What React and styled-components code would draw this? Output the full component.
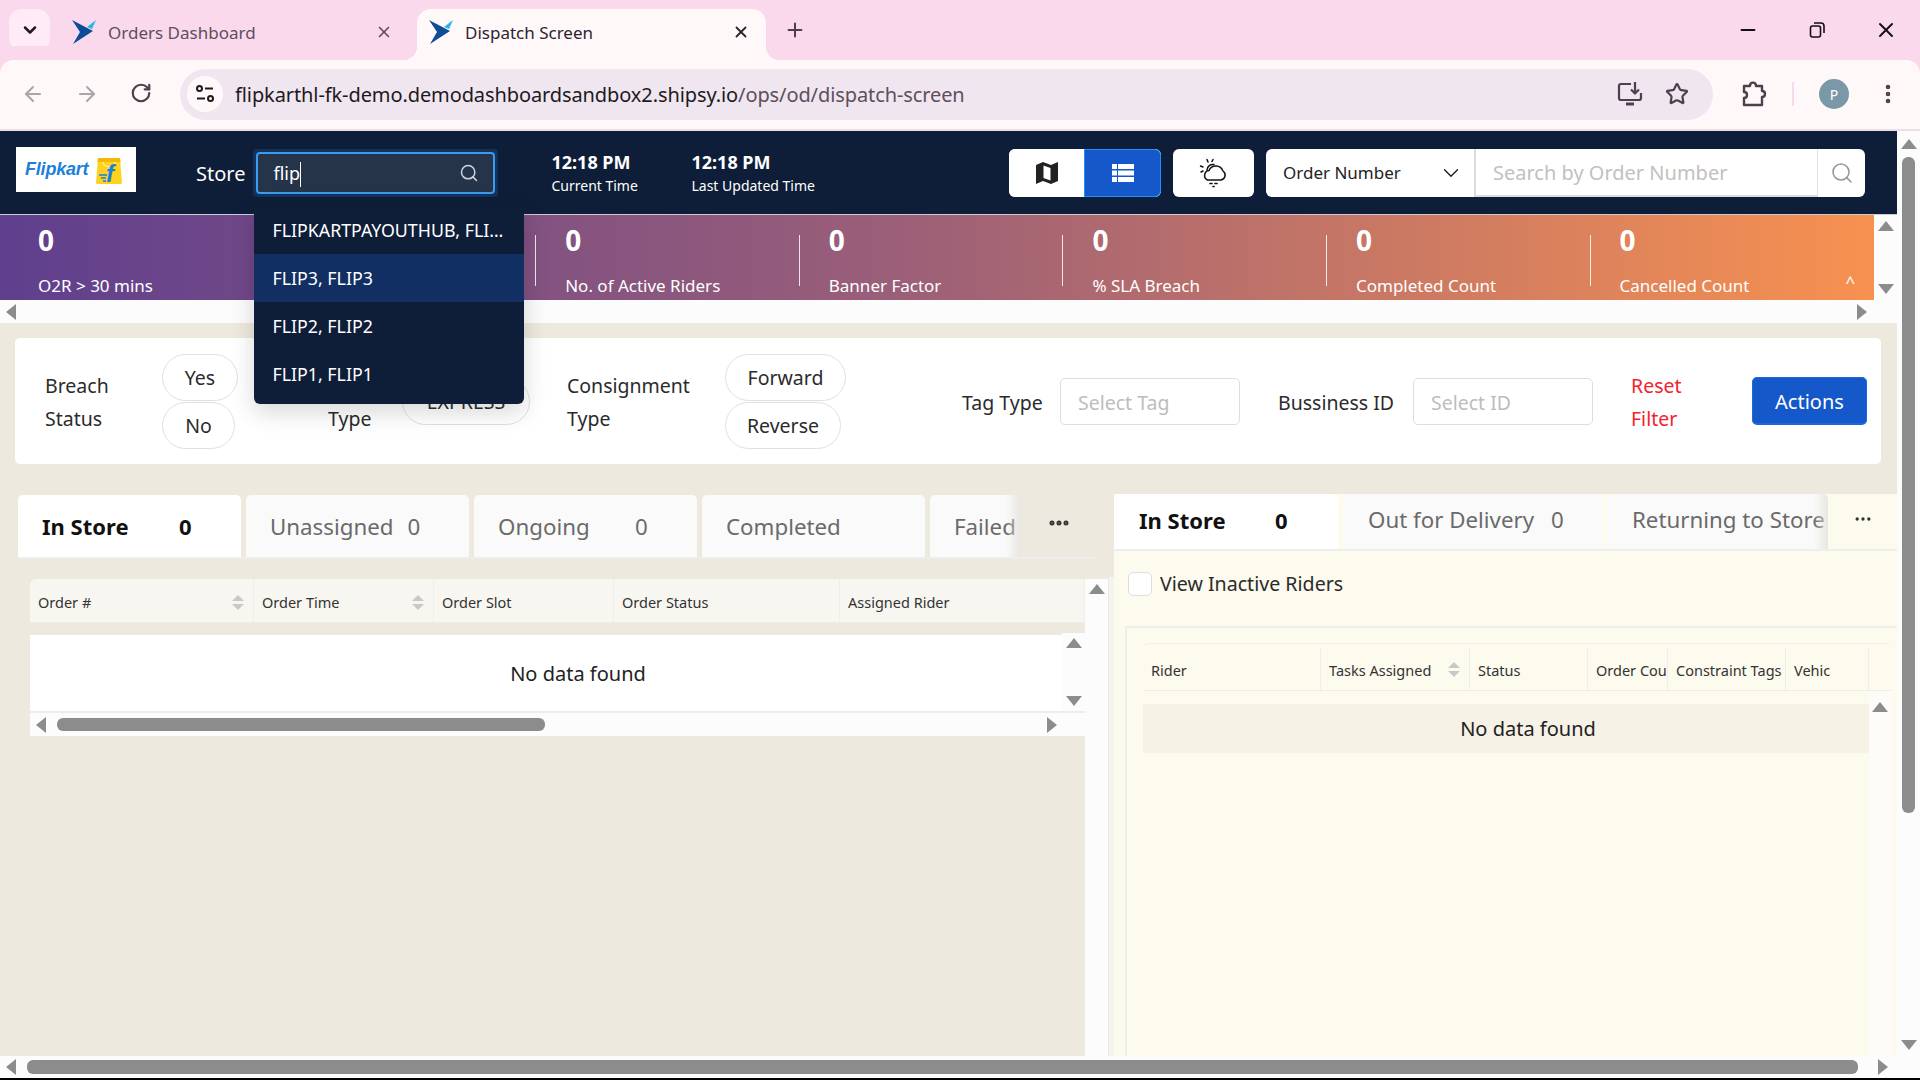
import React from 'react'
import styled, { createGlobalStyle } from 'styled-components'
import { ArrowLeft, ArrowRight, ChevronDown, Minus, MoreHorizontal, MoreVertical, Plus, RotateCw, Search, Star, X } from 'lucide-react'

const Global = createGlobalStyle`
	html, body { margin: 0; padding: 0; overflow: hidden; background: #fff; }
	* { box-sizing: border-box; }
	body { font-family: "Noto Sans", "Open Sans", sans-serif; color: #222; }
`

const Screen = styled.div`
	width: 1920px;
	height: 1080px;
	display: flex;
	flex-direction: column;
	overflow: hidden;
	background: #000;
`

/* browser chrome */
const TabStrip = styled.div`
	flex: 0 0 60px;
	display: flex;
	align-items: flex-end;
	padding-left: 9px;
	background: #fbd9ec;
`
const TabMenu = styled.div`
	width: 41px;
	height: 42px;
	margin-bottom: 9px;
	margin-right: 10px;
	display: flex;
	align-items: center;
	justify-content: center;
	border-radius: 13px;
	background: #ffebf5;
	color: #1f1a1f;
`
const BrowserTab = styled.div`
	position: relative;
	width: 349px;
	height: 51px;
	margin-right: 8px;
	padding: 0 16px 5px 12px;
	display: flex;
	align-items: center;
	font-size: 17px;
	border-radius: 14px 14px 0 0;
	color: ${p => (p.$active ? '#2c2530' : '#5d4f5c')};
	background: ${p => (p.$active ? '#fff8f9' : 'transparent')};
	${p => p.$active && `
		&::before, &::after {
			content: '';
			position: absolute;
			bottom: 0;
			width: 14px;
			height: 14px;
		}
		&::before { left: -14px; background: radial-gradient(circle at 0 0, transparent 14px, #fff8f9 14.5px); }
		&::after { right: -14px; background: radial-gradient(circle at 100% 0, transparent 14px, #fff8f9 14.5px); }
	`}
`
const TabTitle = styled.span`
	flex: 1;
	margin-left: 12px;
`
const TabPlus = styled.div`
	margin: 0 0 15px 10px;
	height: 30px;
	display: flex;
	align-items: center;
	color: #4d3f4b;
`
const WindowControls = styled.div`
	margin-left: auto;
	height: 60px;
	display: flex;
	align-items: center;
	color: #111;
`
const WindowButton = styled.div`
	width: 69px;
	display: flex;
	justify-content: center;
`
const Toolbar = styled.div`
	flex: 0 0 71px;
	display: flex;
	align-items: center;
	padding: 0 0 1px 0;
	background: #fff8f9;
	border-bottom: 2px solid #eadfe6;
	border-radius: 14px 14px 0 0;
	box-shadow: 0 -14px 0 #fbd9ec;
`
const NavButton = styled.div`
	width: 54px;
	display: flex;
	justify-content: center;
	color: ${p => (p.$off ? '#aaa5a8' : '#4d3f4b')};
`
const NavGroup = styled.div`
	display: flex;
	padding-left: 6px;
	margin-right: 12px;
`
const AddressBar = styled.div`
	width: 1533px;
	height: 51px;
	display: flex;
	align-items: center;
	padding: 0 24px 0 7px;
	border-radius: 26px;
	background: #f0e6ef;
`
const SiteIcon = styled.div`
	width: 36px;
	height: 36px;
	border-radius: 50%;
	background: #fff8f9;
	display: flex;
	align-items: center;
	justify-content: center;
`
const Url = styled.div`
	flex: 1;
	margin-left: 12px;
	font-size: 20px;
	letter-spacing: -0.1px;
	white-space: nowrap;
	color: #1d1a1e;
	span { color: #5d4f5c; }
`
const AddressIcon = styled.div`
	margin-left: 22px;
	display: flex;
	color: #4d3f4b;
`
const ToolbarIcons = styled.div`
	flex: 1;
	display: flex;
	align-items: center;
	color: #4d3f4b;
	padding-left: 28px;
`
const ToolbarSep = styled.div`
	width: 2px;
	height: 24px;
	margin: 0 25px;
	background: #fbd9ec;
`
const Avatar = styled.div`
	width: 30px;
	height: 30px;
	border-radius: 50%;
	background: #7b98a8;
	color: #fff;
	font-size: 14px;
	display: flex;
	align-items: center;
	justify-content: center;
	margin-right: 27px;
`

/* app shell */
const AppBody = styled.div`
	flex: 1;
	display: flex;
	min-height: 0;
	background: #fcfcfc;
`
const Page = styled.div`
	flex: 0 0 1897px;
	display: flex;
	flex-direction: column;
	min-height: 0;
`
const TopBar = styled.div`
	flex: 0 0 84px;
	display: flex;
	align-items: center;
	padding: 0 32px 0 16px;
	background: #0e1e38;
	border-bottom: 1px solid #c9ccd2;
	color: #fff;
`
const LogoBox = styled.div`
	width: 120px;
	height: 45px;
	margin-top: -6px;
	background: #fff;
	display: flex;
	align-items: center;
	padding-left: 9px;
	gap: 7px;
`
const LogoWord = styled.span`
	font: italic 700 18px "Liberation Sans", sans-serif;
	color: #1b7fdb;
	letter-spacing: -0.2px;
`
const StoreLabel = styled.span`
	margin: 2px 0 0 60px;
	font-size: 20px;
`
const StoreField = styled.div`
	position: relative;
	width: 245px;
	height: 48px;
	margin-left: 8px;
	padding: 3px;
	border-radius: 4px;
	background: #12315b;
`
const StoreInput = styled.div`
	width: 100%;
	height: 100%;
	display: flex;
	align-items: center;
	justify-content: space-between;
	padding: 0 14px 0 15px;
	border: 2px solid #3a9bf0;
	border-radius: 4px;
	background: #263449;
	font-size: 18px;
	color: #fff;
`
const StoreText = styled.span`
	padding-top: 3px;
`
const Caret = styled.i`
	display: inline-block;
	width: 1px;
	height: 25px;
	background: #fff;
	vertical-align: -7px;
`
const StoreMenu = styled.div`
	position: absolute;
	z-index: 20;
	top: 57px;
	left: 1px;
	width: 270px;
	padding-bottom: 6px;
	background: #0e1e38;
	border-radius: 0 0 6px 6px;
	box-shadow: 0 8px 24px rgba(0, 0, 0, 0.16);
`
const StoreOption = styled.div`
	height: 48px;
	line-height: 48px;
	padding: 0 18px;
	font-size: 17.8px;
	color: #fff;
	white-space: nowrap;
	overflow: hidden;
	text-overflow: ellipsis;
	background: ${p => (p.$selected ? '#122f63' : 'transparent')};
`
const TimeBlock = styled.div`
	width: 140px;
	margin-left: ${p => (p.$first ? '53px' : '0')};
`
const TimeValue = styled.div`
	font-size: 18px;
	font-weight: 700;
	line-height: 24px;
`
const TimeLabel = styled.div`
	margin-top: 2px;
	font-size: 14px;
	line-height: 20px;
`
const ViewToggle = styled.div`
	margin-left: auto;
	width: 152px;
	height: 48px;
	display: flex;
	border-radius: 6px;
	overflow: hidden;
	background: #fff;
`
const ViewButton = styled.div`
	flex: 0 0 ${p => p.$width}px;
	display: flex;
	align-items: center;
	justify-content: center;
	background: ${p => (p.$on ? '#1558c9' : '#fff')};
	${p => p.$on && 'border: 1px solid #1f8fff; border-radius: 0 6px 6px 0;'}
`
const WeatherButton = styled.div`
	width: 81px;
	height: 48px;
	margin: 0 12px;
	display: flex;
	align-items: center;
	justify-content: center;
	border-radius: 6px;
	background: #fff;
`
const SearchGroup = styled.div`
	display: flex;
	height: 48px;
	border-radius: 6px;
	overflow: hidden;
	background: #fff;
	color: #222;
`
const SearchType = styled.div`
	width: 210px;
	display: flex;
	align-items: center;
	justify-content: space-between;
	padding: 0 10px 0 17px;
	border-right: 2px solid #dcdcdc;
	font-size: 17px;
`
const SearchText = styled.div`
	width: 341px;
	padding: 2px 0 0 17px;
	display: flex;
	align-items: center;
	font-size: 20px;
	color: #c4c0bd;
	border-bottom: 2px solid #dcdcdc;
`
const SearchIcon = styled.div`
	width: 48px;
	display: flex;
	align-items: center;
	justify-content: center;
	border-left: 1px solid #e3e3e3;
	color: #999;
`

/* stats */
const StatsRow = styled.div`
	flex: 0 0 85px;
	display: flex;
`
const StatsBand = styled.div`
	flex: 0 0 1874px;
	display: grid;
	grid-template-columns: repeat(7, 263.6px);
	padding-left: 8px;
	background: linear-gradient(90deg, #5f3f8e 0%, #9b5f78 48%, #f89150 100%);
	color: #fff;
`
const Stat = styled.div`
	position: relative;
	padding-left: 30px;
	${p => p.$divider && `
		&::before {
			content: '';
			position: absolute;
			left: 0;
			top: 20px;
			height: 51px;
			width: 1px;
			background: rgba(255, 255, 255, 0.85);
		}
	`}
`
const StatValue = styled.div`
	margin-top: 6px;
	font-size: 28px;
	font-weight: 700;
	line-height: 38px;
`
const StatLabel = styled.div`
	margin-top: 15px;
	font-size: 17px;
	line-height: 24px;
	white-space: nowrap;
`
const Collapse = styled.span`
	position: absolute;
	right: -2px;
	bottom: 7px;
	font-size: 17px;
`
const VTrack = styled.div`
	flex: 0 0 ${p => p.$width || 23}px;
	display: flex;
	flex-direction: column;
	align-items: center;
	justify-content: ${p => (p.$top ? 'flex-start' : 'space-between')};
	padding: ${p => p.$pad || 7}px 0;
	background: ${p => p.$bg || '#fcfcfc'};
`
const HTrack = styled.div`
	flex: 0 0 ${p => p.$height || 23}px;
	display: flex;
	align-items: center;
	padding: 0 ${p => p.$right || 7}px 0 ${p => p.$pad || 7}px;
	background: #fcfcfc;
	justify-content: space-between;
`
const Arrow = styled.i`
	display: block;
	flex: none;
	width: 0;
	height: 0;
	border-style: solid;
	border-color: transparent;
	${p => p.$dir === 'up' && `border-width: 0 ${p.$size || 8}px ${p.$size || 10}px; border-bottom-color: ${p.$color || '#8c8c8c'};`}
	${p => p.$dir === 'down' && `border-width: ${p.$size || 10}px ${p.$size || 8}px 0; border-top-color: ${p.$color || '#8c8c8c'};`}
	${p => p.$dir === 'left' && 'border-width: 8px 10px 8px 0; border-right-color: #8c8c8c;'}
	${p => p.$dir === 'right' && 'border-width: 8px 0 8px 10px; border-left-color: #8c8c8c;'}
`
const Thumb = styled.div`
	height: 13px;
	border-radius: 6px;
	background: #8c8c8c;
	width: ${p => p.$width}px;
	margin-left: ${p => p.$left || 0}px;
	margin-right: auto;
`

/* filters */
const FilterCard = styled.div`
	flex: 0 0 126px;
	margin: 15px 16px 0 15px;
	display: flex;
	align-items: center;
	padding-left: 30px;
	border-radius: 5px;
	background: #fff;
`
const FilterGroup = styled.div`
	flex: 0 0 ${p => p.$width}px;
	display: flex;
	align-items: center;
`
const FilterLabel = styled.div`
	flex: 0 0 ${p => p.$width}px;
	font-size: 19.5px;
	line-height: 33px;
	color: #2b2b2b;
	padding-top: 2px;
`
const PillStack = styled.div`
	display: flex;
	flex-direction: column;
	gap: 1px;
	align-items: flex-start;
`
const Pill = styled.div`
	width: ${p => p.$width}px;
	height: 47px;
	display: flex;
	align-items: center;
	justify-content: center;
	border: 1px solid #e0e0e0;
	border-radius: 24px;
	font-size: 19.5px;
	color: #2b2b2b;
`
const SelectBox = styled.div`
	width: 180px;
	height: 47px;
	padding: 2px 0 0 17px;
	display: flex;
	align-items: center;
	border: 1px solid #dedede;
	border-radius: 5px;
	font-size: 19.5px;
	color: #bdbdbd;
`
const ResetLink = styled.div`
	flex: 0 0 121px;
	padding-top: 2px;
	color: #f5222d;
	font-size: 19.5px;
	line-height: 33px;
`
const ActionButton = styled.div`
	width: 115px;
	height: 48px;
	padding-top: 2px;
	display: flex;
	align-items: center;
	justify-content: center;
	border: 1px solid #1a68dc;
	border-bottom: 2px solid #1a68dc;
	border-radius: 5px;
	background: #1558c9;
	color: #fff;
	font-size: 20px;
`

/* panels */
const Panels = styled.div`
	flex: 1;
	min-height: 0;
	margin-top: 30px;
	display: flex;
`
const OuterBg = styled.div`
	flex: 1;
	min-height: 0;
	display: flex;
	flex-direction: column;
	background: #ede9de;
`
const LeftPanel = styled.div`
	flex: 0 0 1109px;
	display: flex;
	flex-direction: column;
	padding-top: 1px;
	min-height: 0;
	background: #ede9de;
`
const RightPanel = styled.div`
	flex: 1;
	display: flex;
	flex-direction: column;
	border-left: 5px solid;
	border-image: linear-gradient(#ede9de 84px, #f6f4ef 84px) 1;
	background: #fdfaee;
	min-height: 0;
`
const TabBar = styled.div`
	flex: none;
	display: flex;
	gap: 5px;
	margin-left: ${p => p.$left || 0}px;
	margin-right: ${p => p.$right || 0}px;
	height: ${p => p.$height}px;
	border-bottom: 2px solid #eeeeec;
	overflow: hidden;
`
const Tab = styled.div`
	position: relative;
	flex: 0 0 auto;
	width: ${p => p.$width || 223}px;
	height: 100%;
	padding: 0 0 ${p => p.$lift || 0}px ${p => p.$pad || 24}px;
	display: flex;
	align-items: center;
	border-radius: 5px 5px 0 0;
	background: ${p => (p.$active ? '#fff' : '#fafafa')};
	color: ${p => (p.$active ? '#111' : '#6a6a6a')};
	font-size: ${p => (p.$active ? 22 : 22.3)}px;
	font-weight: ${p => (p.$active ? 700 : 400)};
	white-space: nowrap;
	overflow: hidden;
	${p => p.$fade && `
		&::after {
			content: '';
			position: absolute;
			right: 0;
			top: 0;
			bottom: 0;
			width: 14px;
			background: linear-gradient(90deg, rgba(240, 240, 236, 0), rgba(228, 226, 220, 0.8));
		}
	`}
`
const TabLabel = styled.span`
	min-width: ${p => p.$width || 0}px;
	padding-right: 14px;
`
const TabMore = styled.div`
	flex: 1;
	display: flex;
	align-items: center;
	justify-content: center;
	color: #333;
	padding: 0 ${p => p.$nudge || 0}px 6px 0;
`
const TableArea = styled.div`
	flex: 1;
	min-height: 0;
	display: flex;
	margin-top: 20px;
	padding-left: 30px;
`
const TableMain = styled.div`
	flex: 0 0 1055px;
	display: flex;
	flex-direction: column;
`
const HeadRow = styled.div`
	flex: 0 0 ${p => p.$height || 44}px;
	display: flex;
	background: ${p => p.$bg || '#f8f6f1'};
	border-bottom: 1px solid #efede6;
	border-radius: ${p => (p.$round ? '6px 0 0 0' : '0')};
`
const HeadCell = styled.div`
	flex: 0 0 ${p => p.$width}px;
	display: flex;
	align-items: center;
	justify-content: space-between;
	padding: ${p => p.$top || 1}px ${p => p.$sortPad || 9}px 0 8px;
	font-size: 14.5px;
	color: #333;
	white-space: nowrap;
	overflow: hidden;
	border-right: 1px solid #f0eee8;
`
const ClipText = styled.span`
	display: block;
	width: ${p => p.$width}px;
	overflow: hidden;
`
const Sort = styled.span`
	display: flex;
	flex-direction: column;
	gap: 3px;
`
const BodyRow = styled.div`
	flex: 0 0 78px;
	margin-top: 10px;
	display: flex;
`
const EmptyCell = styled.div`
	flex: 1;
	margin-top: 2px;
	padding-left: 64px;
	display: flex;
	align-items: center;
	justify-content: center;
	background: #fff;
	font-size: 20px;
	color: #222;
`
const RowDivider = styled.div`
	flex: 0 0 2px;
	background: #efede6;
`
const CheckRow = styled.div`
	flex: none;
	display: flex;
	align-items: center;
	gap: 8px;
	margin-top: 19px;
	padding-left: 14px;
	font-size: 19.6px;
	color: #2b2b2b;
`
const CheckBox = styled.span`
	width: 24px;
	height: 24px;
	border: 1px solid #dedede;
	border-radius: 5px;
	background: #fff;
`
const RiderSection = styled.div`
	flex: 1;
	min-height: 0;
	margin: 29px 0 0 11px;
	padding: 15px 6px 0 16px;
	display: flex;
	flex-direction: column;
	border-top: 2px solid #eeeeea;
	border-left: 2px solid #eeeeea;
`
const RiderCard = styled.div`
	flex: 1;
	min-height: 0;
	display: flex;
	flex-direction: column;
	padding-top: 4px;
	border-top: 1px solid #f2efe4;
	border-radius: 6px 6px 0 0;
`
const RiderBody = styled.div`
	flex: 1;
	min-height: 0;
	display: flex;
`
const RiderMain = styled.div`
	flex: 0 0 726px;
	padding-top: 13px;
`
const EmptyBand = styled.div`
	height: 49px;
	padding-left: 44px;
	display: flex;
	align-items: center;
	justify-content: center;
	background: #f6f2e6;
	font-size: 20px;
	color: #222;
`
const PageScroll = styled(VTrack)`
	padding: 8px 0 6px;
`
const ScrollThumb = styled.div`
	width: 13px;
	height: 656px;
	margin-top: 8px;
	margin-bottom: auto;
	border-radius: 6px;
	background: #8c8c8c;
`
const BottomBar = styled.div`
	flex: 0 0 22px;
	display: flex;
	align-items: center;
	padding-left: 6px;
	background: #fcfcfc;
`
const BlackEdge = styled.div`
	flex: 0 0 2px;
	background: #000;
`
const BottomThumb = styled.div`
	width: 1831px;
	height: 14px;
	margin: 0 20px 0 11px;
	border-radius: 6px;
	background: #8c8c8c;
`

const Favicon = () => (
	<svg width="24" height="24" viewBox="0 0 24 24">
		<path d="M0 0 L21 11 L1 24 L8 12 Z" fill="#0d4c99" />
		<path d="M15 7 L24 0 L20 9 Z" fill="#29b4e8" />
	</svg>
)

const TuneIcon = () => (
	<svg width="20" height="20" viewBox="0 0 20 20" fill="none" stroke="#1f1a1f" strokeWidth="2">
		<circle cx="4.5" cy="4.5" r="2.5" />
		<path d="M10 4.5 H18 M2 14.5 H10" />
		<circle cx="15.5" cy="14.5" r="2.5" />
	</svg>
)

const RestoreIcon = () => (
	<svg width="18" height="18" viewBox="0 0 18 18" fill="none" stroke="#111" strokeWidth="1.6">
		<rect x="2.5" y="5" width="10" height="11" rx="2" />
		<path d="M6 2 H13 Q16 2 16 5 V12" />
	</svg>
)

const InstallIcon = () => (
	<svg width="26" height="26" viewBox="0 0 26 26" fill="none" stroke="#4d3f4b" strokeWidth="2.2">
		<path d="M14 3 H4 Q2 3 2 5 V17 Q2 19 4 19 H22 Q24 19 24 17 V12" />
		<path d="M9 23 H17" strokeWidth="3" />
		<path d="M18 1 V12 M14 8.5 L18 12.5 L22 8.5" />
	</svg>
)

const ExtensionIcon = () => (
	<svg width="26" height="28" viewBox="0 0 26 28" fill="none" stroke="#4d3f4b" strokeWidth="2.4" strokeLinejoin="round">
		<path d="M3 6 H9 C9 1.5 15 1.5 15 6 H21 V11 C25 11 25 17 21 17 V25 H3 V18 C7 18 7 12 3 12 Z" />
	</svg>
)

const MapIcon = () => (
	<svg width="24" height="24" viewBox="0 0 24 24">
		<path d="M1 4 L8 1 L16 4 L23 1 V20 L16 23 L8 20 L1 23 Z" fill="#222" />
		<path d="M8.5 4.5 L15.5 7 V19.5 L8.5 17 Z" fill="#fff" />
	</svg>
)

const ListIcon = () => (
	<svg width="22" height="18" viewBox="0 0 22 18" fill="#fff">
		<rect x="0" y="0" width="5" height="5" />
		<rect x="6" y="0" width="16" height="5" />
		<rect x="0" y="6.5" width="5" height="5" />
		<rect x="6" y="6.5" width="16" height="5" />
		<rect x="0" y="13" width="5" height="5" />
		<rect x="6" y="13" width="16" height="5" />
	</svg>
)

const WeatherIcon = () => (
	<svg width="30" height="30" viewBox="0 0 30 30" fill="none" stroke="#111" strokeWidth="1.5" strokeLinecap="round">
		<path d="M8 12 A6 6 0 0 1 15 6.5" />
		<path d="M8 1.5 L9 4 M1.5 8 L4 9 M2 14 L4 13 M14 1.5 L13 3.5" />
		<path d="M8.5 22 H22 A5 5 0 0 0 24 13 A7.5 7.5 0 0 0 10 12.5 A5 5 0 0 0 8.5 22 Z" />
		<path d="M11 25.5 H13 M16 25.5 H18 M14 28.5 H15" strokeWidth="1.7" />
	</svg>
)

const BagIcon = () => (
	<svg width="28" height="30" viewBox="0 0 28 30">
		<path d="M3 3 H25 L27 28 Q27 29 25 29 H3 Q1 29 1 28 Z" fill="#ffd21f" />
		<path d="M3 3 H25 L25.5 7 H2.5 Z" fill="#f2b705" />
		<path d="M8 7 C8 13 20 13 20 7" fill="none" stroke="#fff3b8" strokeWidth="1.2" />
		<path d="M4 20 H12 M6 23 H11 M8 26 H11" stroke="#1b7fdb" strokeWidth="1.6" />
		<text x="11" y="27" fontFamily="Liberation Sans, sans-serif" fontSize="24" fontStyle="italic" fontWeight="700" fill="#1b7fdb">f</text>
	</svg>
)

const SortCarets = () => (
	<Sort>
		<Arrow $dir="up" $size={6} $color="#c8c8c8" />
		<Arrow $dir="down" $size={6} $color="#c8c8c8" />
	</Sort>
)

const stats = [
	{ label: 'O2R > 30 mins' },
	{ hidden: true, divider: true },
	{ label: 'No. of Active Riders', divider: true },
	{ label: 'Banner Factor', divider: true },
	{ label: '% SLA Breach', divider: true },
	{ label: 'Completed Count', divider: true },
	{ label: 'Cancelled Count', divider: true, collapse: true },
]

const BrowserChrome = () => (
	<>
		<TabStrip>
			<TabMenu><ChevronDown size={20} strokeWidth={3} /></TabMenu>
			<BrowserTab>
				<Favicon />
				<TabTitle>Orders Dashboard</TabTitle>
				<X size={18} strokeWidth={2.2} />
			</BrowserTab>
			<BrowserTab $active>
				<Favicon />
				<TabTitle>Dispatch Screen</TabTitle>
				<X size={18} strokeWidth={2.4} />
			</BrowserTab>
			<TabPlus><Plus size={22} strokeWidth={2.2} /></TabPlus>
			<WindowControls>
				<WindowButton><Minus size={22} strokeWidth={2.2} /></WindowButton>
				<WindowButton><RestoreIcon /></WindowButton>
				<WindowButton><X size={24} strokeWidth={2} /></WindowButton>
			</WindowControls>
		</TabStrip>
		<Toolbar>
			<NavGroup>
				<NavButton $off><ArrowLeft size={24} strokeWidth={2} /></NavButton>
				<NavButton $off><ArrowRight size={24} strokeWidth={2} /></NavButton>
				<NavButton><RotateCw size={22} strokeWidth={2.4} /></NavButton>
			</NavGroup>
			<AddressBar>
				<SiteIcon><TuneIcon /></SiteIcon>
				<Url>flipkarthl-fk-demo.demodashboardsandbox2.shipsy.io<span>/ops/od/dispatch-screen</span></Url>
				<AddressIcon><InstallIcon /></AddressIcon>
				<AddressIcon><Star size={24} strokeWidth={2.2} /></AddressIcon>
			</AddressBar>
			<ToolbarIcons>
				<ExtensionIcon />
				<ToolbarSep />
				<Avatar>P</Avatar>
				<MoreVertical size={24} strokeWidth={2.6} />
			</ToolbarIcons>
		</Toolbar>
	</>
)

const Header = () => (
	<TopBar>
		<LogoBox>
			<LogoWord>Flipkart</LogoWord>
			<BagIcon />
		</LogoBox>
		<StoreLabel>Store</StoreLabel>
		<StoreField>
			<StoreInput>
				<StoreText>flip<Caret /></StoreText>
				<Search size={20} color="#cfd5de" strokeWidth={1.8} />
			</StoreInput>
			<StoreMenu>
				<StoreOption>FLIPKARTPAYOUTHUB, FLIPKARTPAYOUTHUB</StoreOption>
				<StoreOption $selected>FLIP3, FLIP3</StoreOption>
				<StoreOption>FLIP2, FLIP2</StoreOption>
				<StoreOption>FLIP1, FLIP1</StoreOption>
			</StoreMenu>
		</StoreField>
		<TimeBlock $first>
			<TimeValue>12:18 PM</TimeValue>
			<TimeLabel>Current Time</TimeLabel>
		</TimeBlock>
		<TimeBlock>
			<TimeValue>12:18 PM</TimeValue>
			<TimeLabel>Last Updated Time</TimeLabel>
		</TimeBlock>
		<ViewToggle>
			<ViewButton $width={75}><MapIcon /></ViewButton>
			<ViewButton $width={77} $on><ListIcon /></ViewButton>
		</ViewToggle>
		<WeatherButton><WeatherIcon /></WeatherButton>
		<SearchGroup>
			<SearchType>Order Number <ChevronDown size={26} strokeWidth={1.3} /></SearchType>
			<SearchText>Search by Order Number</SearchText>
			<SearchIcon><Search size={24} strokeWidth={1.6} /></SearchIcon>
		</SearchGroup>
	</TopBar>
)

const Stats = () => (
	<>
		<StatsRow>
			<StatsBand>
				{stats.map((s, i) => (
					<Stat key={i} $divider={s.divider}>
						{!s.hidden && <StatValue>0</StatValue>}
						{!s.hidden && <StatLabel>{s.label}</StatLabel>}
						{s.collapse && <Collapse>^</Collapse>}
					</Stat>
				))}
			</StatsBand>
			<VTrack $pad={6}>
				<Arrow $dir="up" />
				<Arrow $dir="down" />
			</VTrack>
		</StatsRow>
		<HTrack $pad={6} $right={30}>
			<Arrow $dir="left" />
			<Arrow $dir="right" />
		</HTrack>
	</>
)

const Filters = () => (
	<FilterCard>
		<FilterGroup $width={283}>
			<FilterLabel $width={117}>Breach<br />Status</FilterLabel>
			<PillStack>
				<Pill $width={76}>Yes</Pill>
				<Pill $width={73}>No</Pill>
			</PillStack>
		</FilterGroup>
		<FilterGroup $width={239}>
			<FilterLabel $width={74}>&nbsp;<br />Type</FilterLabel>
			<Pill $width={128}>EXPRESS</Pill>
		</FilterGroup>
		<FilterGroup $width={395}>
			<FilterLabel $width={158}>Consignment<br />Type</FilterLabel>
			<PillStack>
				<Pill $width={121}>Forward</Pill>
				<Pill $width={116}>Reverse</Pill>
			</PillStack>
		</FilterGroup>
		<FilterGroup $width={316}>
			<FilterLabel $width={98}>Tag Type</FilterLabel>
			<SelectBox>Select Tag</SelectBox>
		</FilterGroup>
		<FilterGroup $width={353}>
			<FilterLabel $width={135}>Bussiness ID</FilterLabel>
			<SelectBox>Select ID</SelectBox>
		</FilterGroup>
		<ResetLink>Reset<br />Filter</ResetLink>
		<ActionButton>Actions</ActionButton>
	</FilterCard>
)

const OrdersPanel = () => (
	<LeftPanel>
		<TabBar $height={64} $left={18} $right={11}>
			<Tab $active><TabLabel $width={137}>In Store</TabLabel>0</Tab>
			<Tab><TabLabel $width={137}>Unassigned</TabLabel>0</Tab>
			<Tab><TabLabel $width={137}>Ongoing</TabLabel>0</Tab>
			<Tab>Completed</Tab>
			<Tab $width={90} $fade>Failed</Tab>
			<TabMore $nudge={6}><MoreHorizontal size={24} strokeWidth={3} /></TabMore>
		</TabBar>
		<TableArea>
			<TableMain>
				<HeadRow $round>
					<HeadCell $width={224} $top={3}>Order # <SortCarets /></HeadCell>
					<HeadCell $width={180} $top={3}>Order Time <SortCarets /></HeadCell>
					<HeadCell $width={180} $top={3}>Order Slot</HeadCell>
					<HeadCell $width={226} $top={3}>Order Status</HeadCell>
					<HeadCell $width={245} $top={3}>Assigned Rider</HeadCell>
				</HeadRow>
				<BodyRow>
					<EmptyCell>No data found</EmptyCell>
					<VTrack $pad={5}>
						<Arrow $dir="up" />
						<Arrow $dir="down" />
					</VTrack>
				</BodyRow>
				<RowDivider />
				<HTrack $pad={6} $right={28}>
					<Arrow $dir="left" />
					<Thumb $width={488} $left={11} />
					<Arrow $dir="right" />
				</HTrack>
			</TableMain>
			<VTrack $top $pad={5}>
				<Arrow $dir="up" />
			</VTrack>
		</TableArea>
	</LeftPanel>
)

const RidersPanel = () => (
	<RightPanel>
		<TabBar $height={57}>
			<Tab $active $width={224} $pad={25} $lift={4}><TabLabel $width={136}>In Store</TabLabel>0</Tab>
			<Tab $width={259} $pad={25} $lift={4}><TabLabel $width={183}>Out for Delivery</TabLabel>0</Tab>
			<Tab $width={221} $pad={25} $lift={4} $fade>Returning to Store</Tab>
			<TabMore $nudge={4}><MoreHorizontal size={20} strokeWidth={2} /></TabMore>
		</TabBar>
		<CheckRow><CheckBox />View Inactive Riders</CheckRow>
		<RiderSection>
			<RiderCard>
				<HeadRow $bg="#fdfaee" $height={43}>
					<HeadCell $width={178}>Rider</HeadCell>
					<HeadCell $width={149}>Tasks Assigned <SortCarets /></HeadCell>
					<HeadCell $width={118}>Status</HeadCell>
					<HeadCell $width={80} $sortPad={1}>Order Count</HeadCell>
					<HeadCell $width={118}>Constraint Tags</HeadCell>
					<HeadCell $width={83}><ClipText $width={36}>Vehicle</ClipText></HeadCell>
				</HeadRow>
				<RiderBody>
					<RiderMain>
						<EmptyBand>No data found</EmptyBand>
					</RiderMain>
					<VTrack $width={22} $top $pad={11} $bg="#fdfcf8">
						<Arrow $dir="up" />
					</VTrack>
				</RiderBody>
			</RiderCard>
		</RiderSection>
	</RightPanel>
)

export default function App() {
	return (
		<Screen>
			<Global />
			<BrowserChrome />
			<AppBody>
				<Page>
					<Header />
					<Stats />
					<OuterBg>
						<Filters />
						<Panels>
							<OrdersPanel />
							<RidersPanel />
						</Panels>
					</OuterBg>
				</Page>
				<PageScroll>
					<Arrow $dir="up" />
					<ScrollThumb />
					<Arrow $dir="down" />
				</PageScroll>
			</AppBody>
			<BottomBar>
				<Arrow $dir="left" />
				<BottomThumb />
				<Arrow $dir="right" />
			</BottomBar>
			<BlackEdge />
		</Screen>
	)
}
